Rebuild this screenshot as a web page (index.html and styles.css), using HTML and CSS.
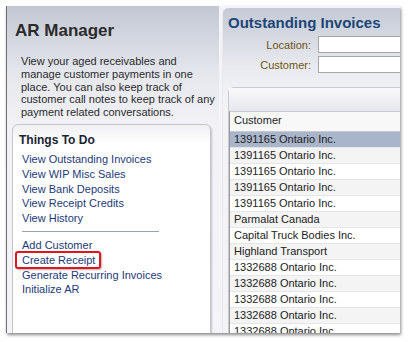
FILE: index.html
```html
<html>
    <head>
        <title>AR Manager</title>
        <link rel="stylesheet" href="styles.css">
    </head>
    <body>
        <div class="frame">
            <div class="side">
                <h1 class="title">AR Manager</h1>
                <p class="intro">View your aged receivables and manage customer payments in one place. You can also keep track of customer call notes to keep track of any payment related conversations.</p>
                <div class="todo">
                    <h2 class="todo-title">Things To Do</h2>
                    <ul class="links">
                        <li><a href="#">View Outstanding Invoices</a></li>
                        <li><a href="#">View WIP Misc Sales</a></li>
                        <li><a href="#">View Bank Deposits</a></li>
                        <li><a href="#">View Receipt Credits</a></li>
                        <li><a href="#">View History</a></li>
                    </ul>
                    <hr class="sep">
                    <ul class="links">
                        <li><a href="#">Add Customer</a></li>
                        <li><a href="#" class="marked">Create Receipt</a></li>
                        <li><a href="#">Generate Recurring Invoices</a></li>
                        <li><a href="#">Initialize AR</a></li>
                    </ul>
                </div>
            </div>
            <div class="main">
                <h1 class="main-title">Outstanding Invoices</h1>
                <div class="field">
                    <label>Location:</label>
                    <input type="text">
                </div>
                <div class="field">
                    <label>Customer:</label>
                    <input type="text">
                </div>
                <div class="grid">
                    <div class="grid-bar"></div>
                    <div class="grid-body">
                        <div class="col-head">Customer</div>
                        <div class="row selected">1391165 Ontario Inc.</div>
                        <div class="row">1391165 Ontario Inc.</div>
                        <div class="row">1391165 Ontario Inc.</div>
                        <div class="row">1391165 Ontario Inc.</div>
                        <div class="row">1391165 Ontario Inc.</div>
                        <div class="row">Parmalat Canada</div>
                        <div class="row">Capital Truck Bodies Inc.</div>
                        <div class="row">Highland Transport</div>
                        <div class="row">1332688 Ontario Inc.</div>
                        <div class="row">1332688 Ontario Inc.</div>
                        <div class="row">1332688 Ontario Inc.</div>
                        <div class="row">1332688 Ontario Inc.</div>
                        <div class="row">1332688 Ontario Inc.</div>
                    </div>
                </div>
            </div>
        </div>
    </body>
</html>
```

FILE: styles.css
```css
body {
    margin: 0;
    background: #fff;
    font-family: 'Liberation Sans', Arial, sans-serif;
}

.frame {
    margin: 6px 0 0 6px;
    width: 393px;
    height: 327px;
    display: flex;
    overflow: hidden;
    background: #f4f4f8;
    border-left: 1px solid #6f6f6f;
    box-shadow: 1px 2px 3px rgba(0,0,0,0.45);
}

.side {
    width: 212px;
    flex: none;
    background: linear-gradient(#c2c7d3, #e6e8ee 70px, #f2f2f6 120px, #f4f4f9);
}

.title {
    margin: 0;
    padding: 14px 0 0 8px;
    font-size: 17px;
    line-height: 22px;
    color: #2b2b2b;
}

.intro {
    margin: 13px 0 0 14px;
    width: 196px;
    font-size: 11px;
    line-height: 12.8px;
    color: #2a2a2a;
}

.todo {
    margin: 5px 0 0 5px;
    width: 197px;
    height: 230px;
    background: linear-gradient(#f0f0f3, #fff 20px);
    border: 1px solid #c6c6ce;
    border-radius: 6px 6px 0 0;
    box-shadow: 1px 1px 2px rgba(0,0,0,0.2);
}

.todo-title {
    margin: 0;
    padding: 7px 0 0 6px;
    font-size: 12px;
    line-height: 16px;
    color: #1b2433;
}

.links {
    list-style: none;
    margin: 4px 0 0 9px;
    padding: 0;
}

.links li {
    font-size: 11px;
    line-height: 14.8px;
}

.links a {
    color: #1c3a78;
    text-decoration: none;
}

.sep {
    margin: 5px 0 6px 9px;
    width: 137px;
    border: none;
    border-top: 1px solid #9aa3b5;
}

.marked {
    position: relative;
}

.marked::after {
    content: "";
    position: absolute;
    left: -7px;
    top: -3px;
    right: -6px;
    bottom: -3px;
    border: 2px solid #e0161f;
    border-radius: 3px;
    box-shadow: 1px 1px 2px rgba(0,0,0,0.3);
}

.main {
    flex: 1;
    margin: 2px 0 0 3px;
    padding: 0 0 0 5px;
    border-radius: 6px 0 0 0;
    border-left: 1px solid #e8e8ee;
    background: linear-gradient(#c4c9d5, #e9ebf0 60px, #f3f3f6 90px);
    overflow: hidden;
}

.main-title {
    margin: 0 0 2px 0;
    padding: 5px 0 0 0;
    font-size: 15px;
    line-height: 20px;
    color: #1d4677;
}

.field {
    display: flex;
    align-items: center;
    margin-top: 1px;
    height: 19px;
}

.field label {
    flex: none;
    width: 83px;
    text-align: right;
    font-size: 11px;
    color: #6f5310;
}

.field input {
    flex: none;
    margin: 0 0 0 7px;
    padding: 0;
    width: 120px;
    height: 17px;
    border: 1px solid #a6a6a6;
    background: #fff;
}

.grid {
    margin-top: 13px;
    border: 1px solid #c8c9d2;
    border-right: none;
    border-radius: 6px 0 0 0;
    background: #f2f2f4;
}

.grid-bar {
    height: 23px;
    background: linear-gradient(#f9f9fb, #e6e7ec);
}

.grid-body {
    border-top: 1px solid #c8c9d2;
    border-left: 1px solid #9b9b9b;
    background: #fff;
}

.col-head {
    height: 19px;
    line-height: 16px;
    padding-left: 4px;
    font-size: 11px;
    color: #222;
    background: #f8f8f8;
    border-bottom: 1px solid #c9c9c9;
}

.row {
    height: 15px;
    line-height: 15px;
    padding-left: 4px;
    font-size: 11px;
    color: #222;
    border-bottom: 1px solid #e6e6e6;
}

.row:nth-child(odd) {
    background: #f4f4f4;
}

.row.selected {
    background: #a9b5cb;
}
```
